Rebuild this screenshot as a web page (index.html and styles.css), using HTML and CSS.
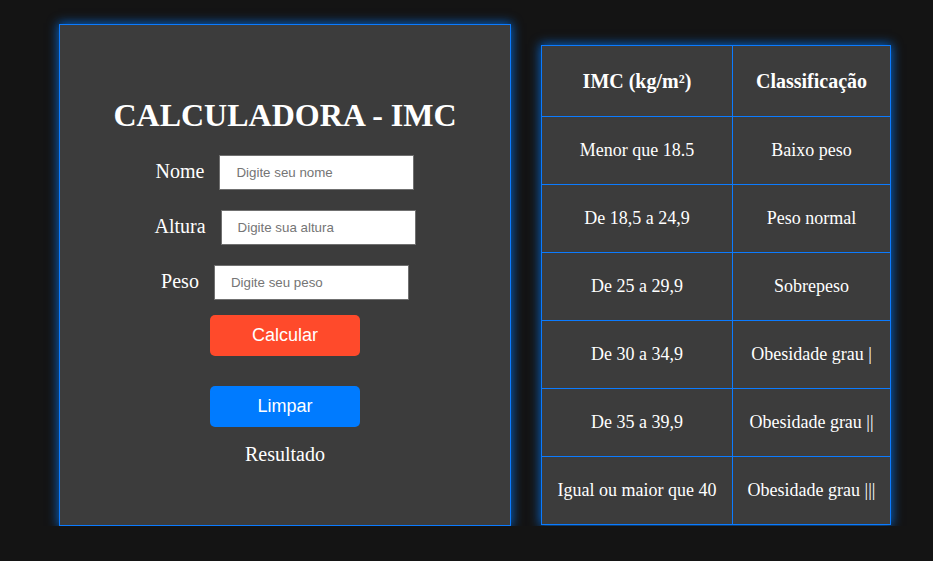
FILE: index.html
```html
<!DOCTYPE html>
<html lang="pt-BR">
<head>
<meta charset="utf-8">
<title>Calculadora IMC</title>
<link rel="stylesheet" href="styles.css">
</head>
<body>
<main class="page">
  <section class="calc">
    <h1 class="calc-title">CALCULADORA - IMC</h1>
    <div class="field">
      <label class="field-label" for="nome">Nome</label>
      <input class="field-input" id="nome" type="text" placeholder="Digite seu nome">
    </div>
    <div class="field">
      <label class="field-label" for="altura">Altura</label>
      <input class="field-input" id="altura" type="text" placeholder="Digite sua altura">
    </div>
    <div class="field">
      <label class="field-label" for="peso">Peso</label>
      <input class="field-input" id="peso" type="text" placeholder="Digite seu peso">
    </div>
    <button class="btn btn-calc" type="button">Calcular</button>
    <button class="btn btn-clear" type="button">Limpar</button>
    <p class="result">Resultado</p>
  </section>
  <table class="imc-table">
    <colgroup>
      <col class="col-imc">
      <col class="col-class">
    </colgroup>
    <thead>
      <tr><th>IMC (kg/m²)</th><th>Classificação</th></tr>
    </thead>
    <tbody>
      <tr><td>Menor que 18.5</td><td>Baixo peso</td></tr>
      <tr><td>De 18,5 a 24,9</td><td>Peso normal</td></tr>
      <tr><td>De 25 a 29,9</td><td>Sobrepeso</td></tr>
      <tr><td>De 30 a 34,9</td><td>Obesidade grau |</td></tr>
      <tr><td>De 35 a 39,9</td><td>Obesidade grau ||</td></tr>
      <tr><td>Igual ou maior que 40</td><td>Obesidade grau |||</td></tr>
    </tbody>
  </table>
</main>
</body>
</html>
```

FILE: styles.css
```css
html, body {
  margin: 0;
  padding: 0;
  background: #141414;
}
body {
  font-family: "Liberation Serif", "Times New Roman", serif;
  color: #ffffff;
}
.page {
  display: flex;
  align-items: flex-start;
  gap: 30px;
  padding: 24px 0 0 59px;
}
.calc {
  box-sizing: border-box;
  width: 452px;
  height: 502px;
  background: #3c3c3c;
  border: 1px solid #0b7bff;
  box-shadow: 0 0 10px 1px rgba(0, 123, 255, 0.75);
  padding-top: 72px;
  display: flex;
  flex-direction: column;
  align-items: center;
}
.calc-title {
  margin: 0 0 21px;
  font-size: 32px;
  font-weight: bold;
}
.field {
  display: flex;
  align-items: center;
  gap: 15px;
  margin-bottom: 20px;
}
.field:last-of-type {
  margin-bottom: 15px;
}
.field-label {
  font-size: 20px;
  margin-top: -2px;
}
.field-input {
  box-sizing: border-box;
  width: 195px;
  height: 35px;
  border: 1px solid #707070;
  border-radius: 0;
  padding: 0 16px;
  background: #ffffff;
  font-family: "Liberation Sans", Arial, sans-serif;
  font-size: 13.33px;
  color: #222;
}
.field-input::placeholder {
  color: #757575;
}
.btn {
  width: 150px;
  height: 41px;
  border: none;
  border-radius: 5px;
  color: #ffffff;
  font-family: "Liberation Sans", Arial, sans-serif;
  font-size: 18px;
  padding: 0;
}
.btn-calc {
  background: #ff4a2b;
  margin-bottom: 30px;
}
.btn-clear {
  background: #007bff;
}
.result {
  margin: 16px 0 0;
  font-size: 20px;
}
.imc-table {
  margin-top: 21px;
  width: 350px;
  table-layout: fixed;
  border-collapse: collapse;
  background: #3c3c3c;
  box-shadow: 0 0 10px 1px rgba(0, 123, 255, 0.75);
  font-size: 18px;
  text-align: center;
}
.col-imc {
  width: 191px;
}
.imc-table th,
.imc-table td {
  border: 1px solid #0b7bff;
  padding: 23px 0;
}
.imc-table th {
  font-size: 20px;
  font-weight: bold;
  padding: 23.5px 0;
}
```
